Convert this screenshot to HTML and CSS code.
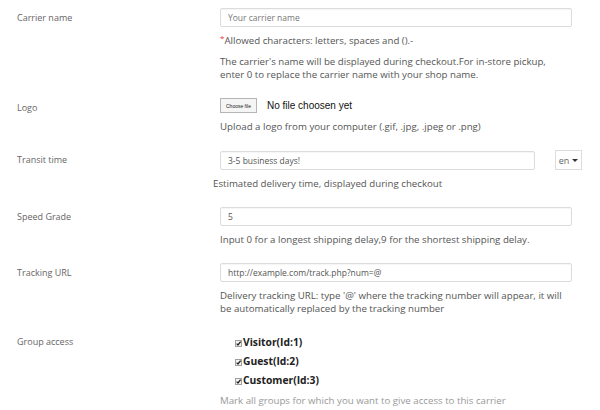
FILE: index.html
```
<!doctype html>
<html>
<head>
<meta charset="utf-8">
<title>Carrier</title>
<link rel="stylesheet" href="styles.css">
</head>
<body>
<form class="carrier-form">
	<div class="row row-name">
		<label class="lbl">Carrier name</label>
		<div class="field">
			<input class="txt" type="text" placeholder="Your carrier name">
			<p class="hint"><sup class="req">*</sup>Allowed characters: letters, spaces and ().-</p>
			<p class="help">The carrier's name will be displayed during checkout.For in-store pickup, enter 0 to replace the carrier name with your shop name.</p>
		</div>
	</div>
	<div class="row row-logo">
		<label class="lbl">Logo</label>
		<div class="field">
			<div class="file">
				<span class="file-btn">Choose file</span>
				<span class="file-name">No file choosen yet</span>
			</div>
			<p class="hint">Upload a logo from your computer (.gif, .jpg, .jpeg or .png)</p>
		</div>
	</div>
	<div class="row row-transit">
		<label class="lbl">Transit time</label>
		<div class="field">
			<div class="lang-line">
				<input class="txt txt-short" type="text" value="3-5 business days!">
				<span class="lang">en <i class="caret"></i></span>
			</div>
			<p class="hint hint-out">Estimated delivery time, displayed during checkout</p>
		</div>
	</div>
	<div class="row row-speed">
		<label class="lbl">Speed Grade</label>
		<div class="field">
			<input class="txt" type="text" value="5">
			<p class="hint">Input 0 for a longest shipping delay,9 for the shortest shipping delay.</p>
		</div>
	</div>
	<div class="row row-url">
		<label class="lbl">Tracking URL</label>
		<div class="field">
			<input class="txt" type="text" value="http://example.com/track.php?num=@">
			<p class="hint">Delivery tracking URL: type '@' where the tracking number will appear, it will be automatically replaced by the tracking number</p>
		</div>
	</div>
	<div class="row row-group">
		<label class="lbl">Group access</label>
		<div class="field">
			<ul class="groups">
				<li><span class="chk"><svg width="7" height="7" viewBox="0 0 7 7"><rect x="0.5" y="0.5" width="6" height="6" fill="#f4f4f4" stroke="#a0a0a0"/><path d="M1.6 3.6 L3 5 L5.6 1.6" fill="none" stroke="#222" stroke-width="1.3"/></svg></span>Visitor(Id:1)</li>
				<li><span class="chk"><svg width="7" height="7" viewBox="0 0 7 7"><rect x="0.5" y="0.5" width="6" height="6" fill="#f4f4f4" stroke="#a0a0a0"/><path d="M1.6 3.6 L3 5 L5.6 1.6" fill="none" stroke="#222" stroke-width="1.3"/></svg></span>Guest(Id:2)</li>
				<li><span class="chk"><svg width="7" height="7" viewBox="0 0 7 7"><rect x="0.5" y="0.5" width="6" height="6" fill="#f4f4f4" stroke="#a0a0a0"/><path d="M1.6 3.6 L3 5 L5.6 1.6" fill="none" stroke="#222" stroke-width="1.3"/></svg></span>Customer(Id:3)</li>
			</ul>
			<p class="hint hint-light">Mark all groups for which you want to give access to this carrier</p>
		</div>
	</div>
</form>
</body>
</html>
```
FILE: styles.css
```
*{margin:0; padding:0; list-style:none; box-sizing:border-box;}
body{background:#fff; font-family:"Open Sans","Liberation Sans",sans-serif; font-size:9.7px; color:#555;}
.carrier-form{padding:8px 0 0 17px;}
.row{display:grid; grid-template-columns:203px 1fr; margin-bottom:17px;}
.lbl{font-size:9px; color:#666; line-height:19px;}
.field{display:flex; flex-direction:column; width:352px;}
.txt{width:352px; height:19px; flex-shrink:0; border:1px solid #dcdcdc; border-radius:2px; box-shadow:inset 0 1px 1px rgba(0,0,0,0.04); padding:0 7px; font-family:"Open Sans",sans-serif; font-size:8.5px; color:#555; outline:none;}
.txt::placeholder{color:#777;}
.txt-short{width:315px;}
.hint{line-height:13px; margin-top:7px; font-size:9.7px; color:#555;}
.help{line-height:13px; margin-top:8px; font-size:9.7px; color:#555;}
.req{color:#e33; font-size:8px; vertical-align:top; line-height:8px;}
.file{display:flex; align-items:center; height:15px;}
.file-btn{width:37px; height:15px; border:1px solid #b5b5b5; background:#f5f5f5; font-family:"Liberation Sans",Arial,sans-serif; font-size:5px; color:#222; display:flex; align-items:center; justify-content:center;}
.file-name{margin-left:10px; font-family:"Liberation Sans",Arial,sans-serif; font-size:10px; color:#111;}
.lang-line{display:flex; align-items:center;}
.lang{margin-left:20px; flex-shrink:0; width:27px; height:20px; border:1px solid #ddd; color:#666; font-size:9px; display:flex; align-items:center; justify-content:center; gap:3px;}
.caret{width:0; height:0; border-left:3px solid transparent; border-right:3px solid transparent; border-top:3px solid #333;}
.hint-out{margin-left:-7px;}
.groups{padding-left:15px;}
.groups li{display:flex; align-items:center; height:19px; font-weight:bold; font-size:10.3px; color:#222;}
.chk{display:flex; margin-right:1px; margin-top:4px;}
.hint-light{color:#999; margin-top:5px;}
```
